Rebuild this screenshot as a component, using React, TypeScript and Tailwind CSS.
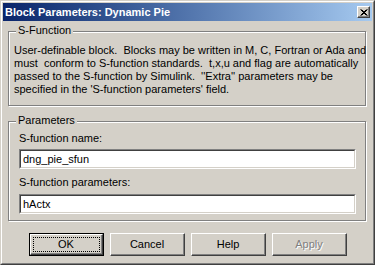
import React from "react";

const raised =
  "border border-t-white border-l-white border-r-[#404040] border-b-[#404040] shadow-[inset_-1px_-1px_0_#808080]";

function GroupBox({ title, className, children }: { title: string; className?: string; children: React.ReactNode }) {
  return (
    <div className={"relative border border-[#808080] shadow-[inset_1px_1px_0_#fff,1px_1px_0_#fff] " + (className ?? "")}>
      <span className="absolute left-[7px] top-[-8px] bg-[#d4d0c8] px-[2px] leading-[13px]">{title}</span>
      {children}
    </div>
  );
}

function TextField({ value }: { value: string }) {
  return (
    <div className="h-[20px] border border-t-[#808080] border-l-[#808080] border-r-white border-b-white">
      <div className="h-full border border-t-[#404040] border-l-[#404040] border-r-[#d4d0c8] border-b-[#d4d0c8] bg-white pl-[2px] leading-[16px]">
        {value}
      </div>
    </div>
  );
}

function Button({ label, isDefault, disabled }: { label: string; isDefault?: boolean; disabled?: boolean }) {
  if (isDefault) {
    return (
      <div className="w-[75px] h-[23px] border border-black">
        <div className={"h-full " + raised + " p-[2px]"}>
          <div className="h-full border border-dotted border-black flex items-center justify-center">{label}</div>
        </div>
      </div>
    );
  }
  return (
    <div className={"w-[75px] h-[23px] flex items-center justify-center " + raised}>
      <span className={disabled ? "text-[#808080] [text-shadow:1px_1px_0_#fff]" : ""}>{label}</span>
    </div>
  );
}

export default function App() {
  return (
    <div className="w-[375px] h-[265px] font-['Liberation_Sans',Arial,sans-serif] text-[11px] text-black">
      <div className="h-full border border-t-[#d4d0c8] border-l-[#d4d0c8] border-r-[#404040] border-b-[#404040]">
        <div className="h-full border border-t-white border-l-white border-r-[#808080] border-b-[#808080] bg-[#d4d0c8] p-[1px] flex flex-col">
          {/* title bar */}
          <div className="h-[18px] flex items-center justify-between pl-[2px] pr-[2px] bg-gradient-to-r from-[#0a246a] to-[#a6caf0]">
            <span className="font-bold text-white text-[11px]">Block Parameters: Dynamic Pie</span>
            <div className={"w-[13px] h-[12px] bg-[#d4d0c8] flex items-center justify-center " + raised}>
              <svg width="8" height="7" viewBox="0 0 8 7">
                <path d="M0.5 0.5 L6.5 6.5 M1.5 0.5 L7.5 6.5 M6.5 0.5 L0.5 6.5 M7.5 0.5 L1.5 6.5" stroke="#000" strokeWidth="1" />
              </svg>
            </div>
          </div>

          <div className="pl-[5px] pr-[6px] pt-[10px]">
            <GroupBox title="S-Function" className="h-[75px] pl-[5px] pt-[12px]">
              <div className="leading-[13px] whitespace-pre">
                <div>User-definable block.  Blocks may be written in M, C, Fortran or Ada and</div>
                <div>must  conform to S-function standards.  t,x,u and flag are automatically</div>
                <div>passed to the S-function by Simulink.  ''Extra'' parameters may be</div>
                <div>specified in the 'S-function parameters' field.</div>
              </div>
            </GroupBox>

            <GroupBox title="Parameters" className="mt-[15px] h-[100px] pl-[10px] pr-[9px] pt-[10px]">
              <div className="leading-[13px]">S-function name:</div>
              <div className="mt-[4px]">
                <TextField value="dng_pie_sfun" />
              </div>
              <div className="mt-[7px] leading-[13px]">S-function parameters:</div>
              <div className="mt-[5px]">
                <TextField value="hActx" />
              </div>
            </GroupBox>
          </div>

          <div className="mt-[12px] flex justify-center gap-[6px]">
            <Button label="OK" isDefault />
            <Button label="Cancel" />
            <Button label="Help" />
            <Button label="Apply" disabled />
          </div>
        </div>
      </div>
    </div>
  );
}
